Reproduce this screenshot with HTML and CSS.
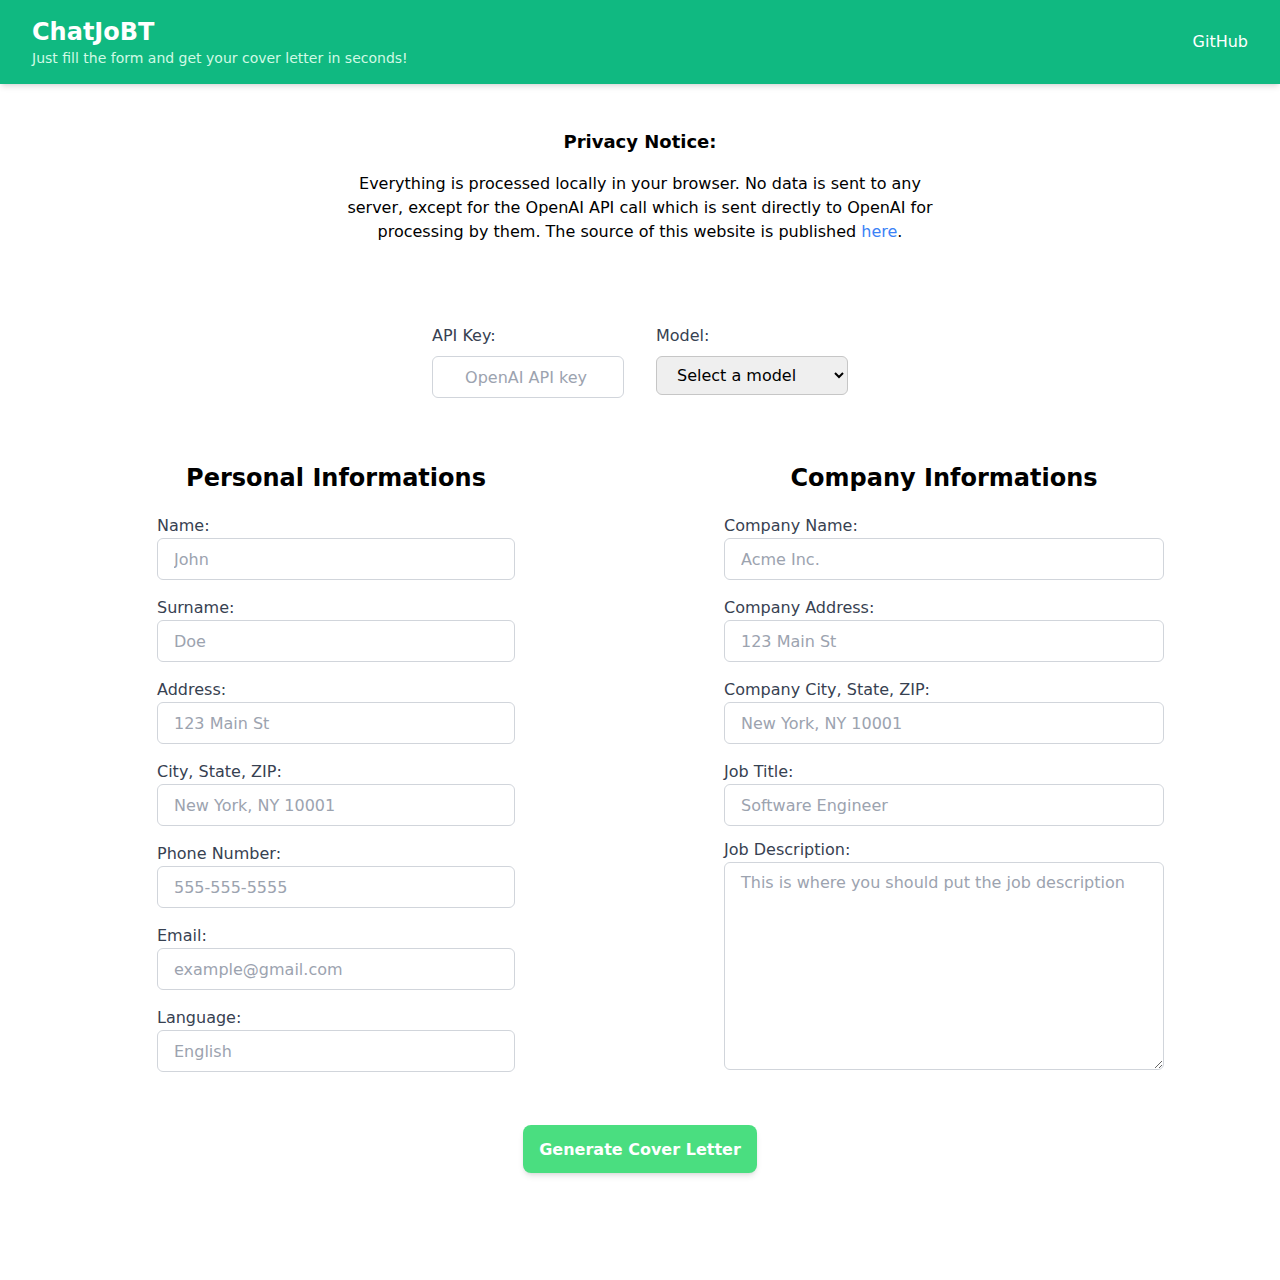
FILE: index.html
```html
<!DOCTYPE html>
<html lang="en">
<head>
<meta charset="utf-8">
<title>ChatJoBT</title>
<link rel="stylesheet" href="styles.css">
</head>
<body>
<header class="topbar">
  <div class="brand">
    <h1 class="brand-title">ChatJoBT</h1>
    <p class="brand-sub">Just fill the form and get your cover letter in seconds!</p>
  </div>
  <a class="gh-link" href="#">GitHub</a>
</header>

<section class="privacy">
  <h2 class="privacy-title">Privacy Notice:</h2>
  <p class="privacy-text">Everything is processed locally in your browser. No data is sent to any server, except for the OpenAI API call which is sent directly to OpenAI for processing by them. The source of this website is published <a class="link" href="#">here</a>.</p>
</section>

<section class="settings">
  <div class="setting">
    <label class="label label-setting">API Key:</label>
    <input class="input input-center" type="text" placeholder="OpenAI API key">
  </div>
  <div class="setting">
    <label class="label label-setting">Model:</label>
    <select class="select">
      <option>Select a model</option>
    </select>
  </div>
</section>

<main class="columns">
  <div class="col col-left">
    <h2 class="col-title">Personal Informations</h2>
    <div class="field"><label class="label">Name:</label><input class="input" placeholder="John"></div>
    <div class="field"><label class="label">Surname:</label><input class="input" placeholder="Doe"></div>
    <div class="field"><label class="label">Address:</label><input class="input" placeholder="123 Main St"></div>
    <div class="field"><label class="label">City, State, ZIP:</label><input class="input" placeholder="New York, NY 10001"></div>
    <div class="field"><label class="label">Phone Number:</label><input class="input" placeholder="555-555-5555"></div>
    <div class="field"><label class="label">Email:</label><input class="input" placeholder="example@gmail.com"></div>
    <div class="field"><label class="label">Language:</label><input class="input" placeholder="English"></div>
  </div>
  <div class="col col-right">
    <h2 class="col-title">Company Informations</h2>
    <div class="field"><label class="label">Company Name:</label><input class="input" placeholder="Acme Inc."></div>
    <div class="field"><label class="label">Company Address:</label><input class="input" placeholder="123 Main St"></div>
    <div class="field"><label class="label">Company City, State, ZIP:</label><input class="input" placeholder="New York, NY 10001"></div>
    <div class="field field-tight"><label class="label">Job Title:</label><input class="input" placeholder="Software Engineer"></div>
    <div class="field"><label class="label">Job Description:</label><textarea class="input textarea" placeholder="This is where you should put the job description"></textarea></div>
  </div>
</main>

<div class="actions">
  <button class="btn">Generate Cover Letter</button>
</div>
</body>
</html>
```

FILE: styles.css
```css
* { box-sizing: border-box; }
html, body { margin: 0; padding: 0; }
body {
  font-family: "DejaVu Sans", sans-serif;
  font-size: 16px;
  line-height: 24px;
  color: #000;
  background: #fff;
}
.topbar {
  display: flex;
  justify-content: space-between;
  align-items: center;
  height: 84px;
  padding: 0 32px;
  background: #10b981;
  color: #fff;
  box-shadow: 0 4px 6px -1px rgba(0,0,0,0.1), 0 2px 4px -2px rgba(0,0,0,0.1);
}
.brand-title {
  margin: 0;
  font-size: 24px;
  line-height: 32px;
  font-weight: 700;
}
.brand-sub {
  margin: 0;
  font-size: 14px;
  line-height: 20px;
  color: #d1fae5;
}
.gh-link {
  color: #fff;
  text-decoration: none;
  font-size: 16px;
}
.privacy {
  margin: 44px auto 0;
  width: 600px;
  text-align: center;
}
.privacy-title {
  margin: 0 0 16px;
  font-size: 18px;
  line-height: 28px;
  font-weight: 700;
}
.privacy-text {
  margin: 0;
}
.link { color: #3b82f6; text-decoration: none; }
.settings {
  display: flex;
  justify-content: center;
  gap: 32px;
  margin-top: 80px;
}
.setting {
  display: flex;
  flex-direction: column;
  align-items: flex-start;
  width: 192px;
}
.label {
  display: block;
  color: #374151;
  font-size: 16px;
  line-height: 24px;
}
.label-setting { margin-bottom: 8px; }
.input {
  display: block;
  width: 100%;
  height: 42px;
  padding: 8px 16px;
  border: 1px solid #d1d5db;
  border-radius: 6px;
  font-family: "DejaVu Sans", sans-serif;
  font-size: 16px;
  line-height: 24px;
  color: #111827;
  background: #fff;
  outline: none;
}
.input::placeholder { color: #9ca3af; }
.input-center { text-align: center; padding: 8px 20px 8px 16px; }
.select {
  height: 39px;
  width: 192px;
  padding: 0 4px 0 16px;
  font-family: "DejaVu Sans", sans-serif;
  font-size: 16px;
  color: #000;
  background-color: #efefef;
  border: 1px solid #c6c6c6;
  border-radius: 6px;
}
.columns {
  display: flex;
  align-items: flex-start;
  gap: 209px;
  padding-left: 157px;
  margin-top: 64px;
}
.col-left { width: 358px; }
.col-right { width: 440px; }
.col-title {
  margin: 0 0 20px;
  text-align: center;
  font-size: 24px;
  line-height: 32px;
  font-weight: 700;
}
.field { margin-bottom: 16px; }
.field-tight { margin-bottom: 12px; }
.textarea {
  height: 208px;
  resize: vertical;
}
.actions {
  display: flex;
  justify-content: center;
  margin-top: 37px;
  padding-bottom: 80px;
}
.btn {
  height: 48px;
  padding: 0 16px;
  border: none;
  border-radius: 8px;
  background: #4ade80;
  color: #fff;
  font-family: "DejaVu Sans", sans-serif;
  font-size: 16px;
  font-weight: 700;
  box-shadow: 0 4px 6px -1px rgba(0,0,0,0.1), 0 2px 4px -2px rgba(0,0,0,0.1);
}
```
